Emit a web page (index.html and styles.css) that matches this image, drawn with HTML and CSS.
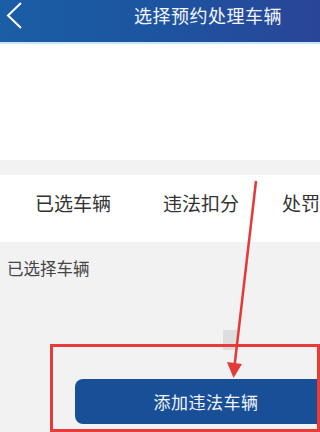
FILE: index.html
```html
<!DOCTYPE html>
<html lang="zh-CN">
<head>
    <meta charset="UTF-8">
    <meta name="viewport" content="width=device-width, initial-scale=1.0">
    <title>选择预约处理车辆</title>
    <link rel="stylesheet" href="styles.css">
</head>
<body>

    <!-- Top bar -->
    <div class="topbar">
        <svg class="back" width="20" height="28" viewBox="0 0 20 28">
            <path d="M17 2 L4 14.5 L17 27" fill="none" stroke="#fff" stroke-width="2"/>
        </svg>
        <div class="title">选择预约处理车辆</div>
    </div>

    <div class="blank"></div>

    <!-- Tabs -->
    <div class="tabs">
        <div class="tab">已选车辆</div>
        <div class="tab">违法扣分</div>
        <div class="tab">处罚</div>
    </div>

    <div class="label">已选择车辆</div>

    <button class="add-btn">添加违法车辆</button>

    <!-- Annotation overlay -->
    <div class="scroll-mark"></div>
    <div class="mark-box"></div>
    <svg class="arrow" width="320" height="432" viewBox="0 0 320 432">
        <line x1="256" y1="181" x2="234.5" y2="366" stroke="#e53935" stroke-width="2.5"/>
        <polygon points="227,362 242,364 233.5,378" fill="#e53935"/>
    </svg>

</body>
</html>
```

FILE: styles.css
```css
/* Page */
body {
    margin: 0;
    padding: 0;
    width: 320px;
    height: 432px;
    overflow: hidden;
    position: relative;
    background-color: #f2f2f2;
    font-family: "Noto Sans CJK SC", "Noto Sans", sans-serif;
}

/* Top bar */
.topbar {
    height: 42px;
    display: flex;
    background: linear-gradient(90deg, #1a5ea6 0%, #1d54a0 50%, #2a4598 100%);
    border-bottom: 2px solid #c4e8f5;
}

.back {
    margin: 1px 0 0 4px;
}

.title {
    margin: 3px 0 0 110px;
    color: #f4f6fa;
    font-size: 18px;
    line-height: 24px;
    letter-spacing: 0.5px;
}

.blank {
    height: 116px;
    background-color: #fff;
}

/* Tabs */
.tabs {
    margin-top: 15px;
    height: 67px;
    box-sizing: border-box;
    padding: 15px 0 0 35px;
    display: grid;
    grid-template-columns: 128px 119px auto;
    background-color: #fff;
    white-space: nowrap;
    overflow: hidden;
}

.tab {
    font-size: 19px;
    line-height: 26px;
    color: #333;
}

.label {
    padding: 15px 0 0 7px;
    font-size: 16.5px;
    line-height: 22px;
    color: #444;
}

/* Add button */
.add-btn {
    display: block;
    margin: 100px 0 0 75px;
    width: 245px;
    height: 45px;
    border: none;
    border-radius: 8px 0 0 8px;
    background-color: #184f97;
    color: #f2f4f8;
    font-family: inherit;
    font-size: 17px;
    letter-spacing: 0.5px;
    padding: 0 0 0 17px;
}

/* Annotation */
.scroll-mark {
    position: absolute;
    left: 223px;
    top: 330px;
    width: 14px;
    height: 20px;
    background-color: #dedede;
}

.mark-box {
    position: absolute;
    left: 50px;
    top: 344px;
    width: 270px;
    height: 88px;
    box-sizing: border-box;
    border: 3px solid #ea3b3b;
}

.arrow {
    position: absolute;
    left: 0;
    top: 0;
}
```
